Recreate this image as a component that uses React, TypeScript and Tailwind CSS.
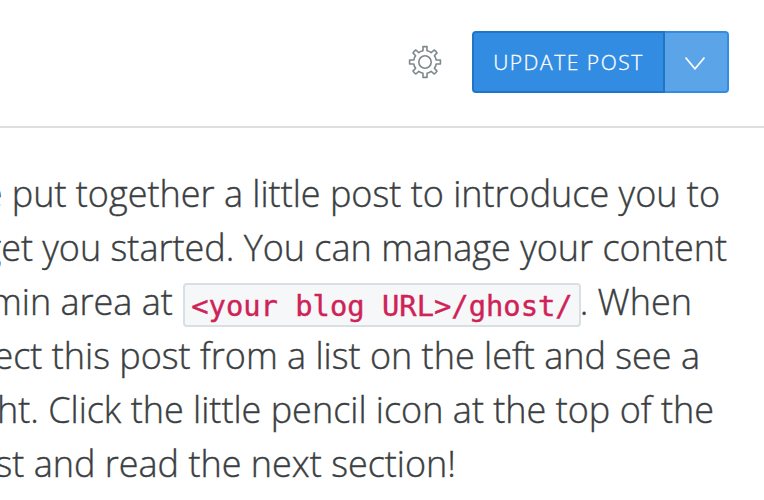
import React from "react";

function GearIcon() {
  return (
    <svg className="block h-[34px] w-[34px]" viewBox="-17 -17 34 34" fill="none" stroke="#7d888b" strokeWidth="1.6" strokeLinejoin="round">
      <path d="M-2 -15.4H2V-11.2Q4.4 -10.8 6.2 -9.4L9.1 -12Q10.8 -11 12 -9.1L9.4 -6.2Q10.8 -4.4 11.2 -2H15.4V2H11.2Q10.8 4.4 9.4 6.2L12 9.1Q10.8 11 9.1 12L6.2 9.4Q4.4 10.8 2 11.2V15.4H-2V11.2Q-4.4 10.8 -6.2 9.4L-9.1 12Q-10.8 11 -12 9.1L-9.4 6.2Q-10.8 4.4 -11.2 2H-15.4V-2H-11.2Q-10.8 -4.4 -9.4 -6.2L-12 -9.1Q-10.8 -11 -9.1 -12L-6.2 -9.4Q-4.4 -10.8 -2 -11.2Z" />
      <circle r="6.2" />
    </svg>
  );
}

function Header() {
  return (
    <header className="flex h-32 items-start justify-end border-b-2 border-[#dfdfdf] pr-[35px]">
      <button className="mt-[45px] mr-[30px]" aria-label="Settings">
        <GearIcon />
      </button>
      <div className="mt-[31px] flex h-[62px]">
        <button className="w-[193px] rounded-l-[4px] border-2 border-[#1f76c4] bg-[#328de2] pt-0.5 text-[21px] font-light tracking-[1.55px] whitespace-nowrap text-white [-webkit-text-stroke:0.3px_white]">
          UPDATE POST
        </button>
        <button className="flex w-16 items-center justify-center rounded-r-[4px] border-y-2 border-r-2 border-[#328de2] bg-[#5ba4e7] pt-0.5 pr-0.5" aria-label="More options">
          <svg className="h-[13px] w-5" viewBox="0 0 20 13" fill="none" stroke="white" strokeWidth="1.7">
            <path d="M0.5 0.5 10 11.8 19.5 0.5" />
          </svg>
        </button>
      </div>
    </header>
  );
}

function Line({ className, children }: { className: string; children: React.ReactNode }) {
  return <div className={`flex h-[54px] justify-end whitespace-pre ${className}`}>{children}</div>;
}

export default function App() {
  return (
    <div className="h-[500px] w-[764px] overflow-hidden bg-white font-['Open_Sans',sans-serif]">
      <Header />
      <main className="pt-[39px] text-[36px] leading-[54px] font-light text-[#3a3e41] [-webkit-text-stroke:0.4px_#3a3e41]">
        <Line className="w-[720px]">e put together a little post to introduce you to</Line>
        <Line className="w-[727px]">get you started. You can manage your content</Line>
        <Line className="w-[692px]">
          <span>min area at </span>
          <code className="mt-[8px] mr-[-1px] ml-px h-11 rounded-[4px] border-2 border-[#d9e0e3] bg-[#f5f7f9] px-[6px] font-['DejaVu_Sans_Mono',monospace] text-[28.8px] leading-[42px] font-normal text-[#cf2257] [-webkit-text-stroke:0.4px_#cf2257]">
            {"<your blog URL>/ghost/"}
          </code>
          <span>. When</span>
        </Line>
        <Line className="w-[700px]">ect this post from a list on the left and see a</Line>
        <Line className="w-[714px]">ht. Click the little pencil icon at the top of the</Line>
        <Line className="w-[456px]">st and read the next section!</Line>
      </main>
    </div>
  );
}
